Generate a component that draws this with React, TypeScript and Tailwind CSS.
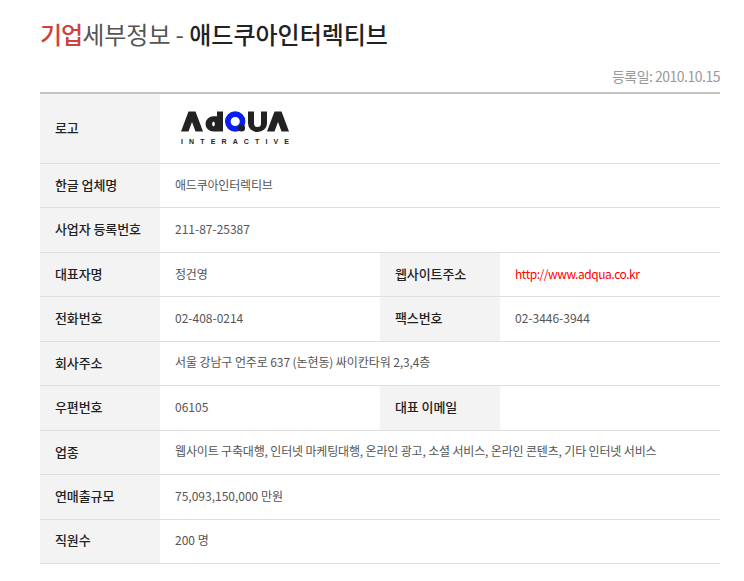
const font = { fontFamily: '"Noto Sans CJK KR", "Noto Sans", sans-serif' };

function Logo() {
  return (
    <svg width="112" height="36" viewBox="0 0 112 36" className="block">
      <path d="M1 21.5 L8.5 1.5 H15.5 L23 21.5 H15.5 L12 12 L8.5 21.5 Z" fill="#222" />
      <path d="M37 1.5 H43 V21.5 H33.5 A8 7.6 0 0 1 33.5 6.3 H37 Z M33.5 11.6 A2.9 2.9 0 0 0 33.5 16.6 A2.9 2.9 0 0 0 33.5 11.6 Z" fill="#222" fillRule="evenodd" />
      <circle cx="55.2" cy="11.5" r="7.4" fill="none" stroke="#0a1ef0" strokeWidth="5.6" />
      <circle cx="61.6" cy="18" r="3.5" fill="#222" />
      <path d="M68 1.5 H74 V13.5 A3.5 3.5 0 0 0 81 13.5 V1.5 H87 V13.5 A9.5 8.5 0 0 1 68 13.5 Z" fill="#222" />
      <path d="M87 21.5 L94.5 1.5 H101.5 L109 21.5 H101.5 L98 12 L94.5 21.5 Z" fill="#222" />
      <text x="1" y="33.5" fontSize="7" fontWeight="700" fill="#222" textLength="108" fontFamily="Liberation Sans, sans-serif">INTERACTIVE</text>
    </svg>
  );
}

function Label({ children, className = "" }: { children: React.ReactNode; className?: string }) {
  return (
    <div className={"flex w-[120px] shrink-0 items-center bg-[#f3f3f3] pb-[2px] pl-[15px] text-[13px] font-medium tracking-[-0.1px] text-[#222] " + className}>
      {children}
    </div>
  );
}

function Value({ children, className = "" }: { children?: React.ReactNode; className?: string }) {
  return (
    <div className={"flex items-center pb-[2px] pl-[15px] text-xs text-[#555] " + className}>
      {children}
    </div>
  );
}

function Row({ children, height = "h-[44.45px]" }: { children: React.ReactNode; height?: string }) {
  return <div className={"flex border-b border-[#dedede] " + height}>{children}</div>;
}

export default function App() {
  return (
    <div className="h-[581px] overflow-hidden bg-white pl-[40px] pr-[24px] pt-[14px]" style={font}>
      <h1 className="flex h-[39px] items-center text-[24px] text-[#555]">
        <span className="font-medium tracking-[-1px] text-[#d0403f]">기업</span>
        <span>세부정보</span>
        <span className="ml-[5px] font-medium text-[#222]"><span className="font-normal text-[#555]">-</span> 애드쿠아인터렉티브</span>
      </h1>
      <p className="mt-[13px] h-[26px] text-right text-sm tracking-[-0.5px] text-[#999]">등록일: 2010.10.15</p>
      <div className="border-t-2 border-[#c4c4c4]">
        <Row height="h-[70px]">
          <Label className="text-xs">로고</Label>
          <div className="flex items-center pb-[2px] pl-[20px]"><Logo /></div>
        </Row>
        <Row><Label>한글 업체명</Label><Value className="tracking-[-0.2px]">애드쿠아인터렉티브</Value></Row>
        <Row><Label>사업자 등록번호</Label><Value>211-87-25387</Value></Row>
        <Row>
          <Label>대표자명</Label><Value className="w-[220px] tracking-[-0.2px]">정건영</Value>
          <Label>웹사이트주소</Label><Value className="tracking-[-0.45px] text-[#ff0000]">http://www.adqua.co.kr</Value>
        </Row>
        <Row>
          <Label>전화번호</Label><Value className="w-[220px]">02-408-0214</Value>
          <Label>팩스번호</Label><Value>02-3446-3944</Value>
        </Row>
        <Row><Label>회사주소</Label><Value className="tracking-[-0.1px]">서울 강남구 언주로 637 (논현동) 싸이칸타워 2,3,4층</Value></Row>
        <Row>
          <Label>우편번호</Label><Value className="w-[220px]">06105</Value>
          <Label>대표 이메일</Label><Value />
        </Row>
        <Row><Label>업종</Label><Value className="tracking-[-0.16px]">웹사이트 구축대행, 인터넷 마케팅대행, 온라인 광고, 소셜 서비스, 온라인 콘텐츠, 기타 인터넷 서비스</Value></Row>
        <Row><Label>연매출규모</Label><Value>75,093,150,000 만원</Value></Row>
        <Row><Label>직원수</Label><Value>200 명</Value></Row>
      </div>
    </div>
  );
}
